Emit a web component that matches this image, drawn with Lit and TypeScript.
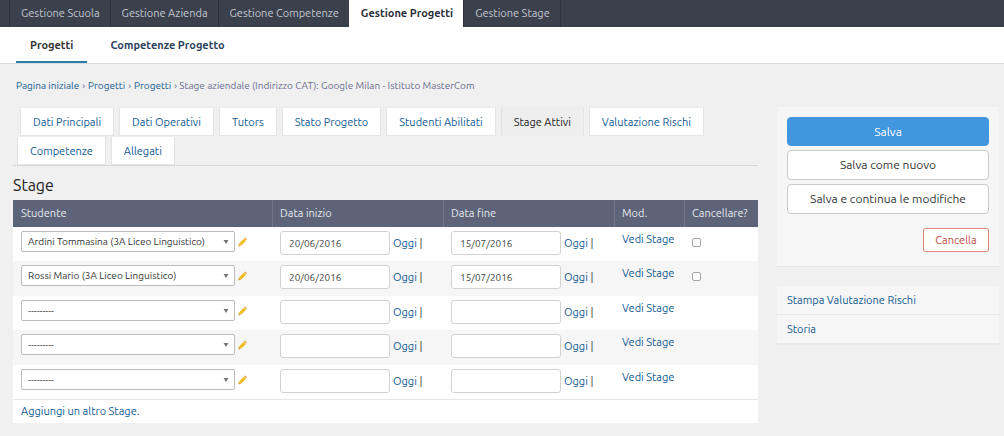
import { LitElement, html, css } from "lit";
import { customElement } from "lit/decorators.js";
import { classMap } from "lit/directives/class-map.js";

interface Row {
  student: string;
  start: string;
  end: string;
  saved: boolean;
}

const SECTIONS = ["Gestione Scuola", "Gestione Azienda", "Gestione Competenze", "Gestione Progetti", "Gestione Stage"];
const TABS = [
  "Dati Principali",
  "Dati Operativi",
  "Tutors",
  "Stato Progetto",
  "Studenti Abilitati",
  "Stage Attivi",
  "Valutazione Rischi",
  "Competenze",
  "Allegati",
];
const EMPTY = "---------";
const ROWS: Row[] = [
  { student: "Ardini Tommasina (3A Liceo Linguistico)", start: "20/06/2016", end: "15/07/2016", saved: true },
  { student: "Rossi Mario (3A Liceo Linguistico)", start: "20/06/2016", end: "15/07/2016", saved: true },
  { student: EMPTY, start: "", end: "", saved: false },
  { student: EMPTY, start: "", end: "", saved: false },
  { student: EMPTY, start: "", end: "", saved: false },
];

@customElement("app-root")
export class AppRoot extends LitElement {
  static styles = css`
    :host {
      display: block;
      min-height: 100vh;
      background: #f0f0f0;
      color: #333;
      font: 11px/16px Ubuntu, "Noto Sans", sans-serif;
    }
    * {
      box-sizing: border-box;
    }
    a {
      color: #125a92;
      text-decoration: none;
    }
    input,
    select,
    button {
      font: inherit;
      color: inherit;
      margin: 0;
    }
    .sections {
      display: flex;
      height: 27px;
      padding-left: 9px;
      background: #3b404d;
    }
    .section {
      padding: 5px 10px 6px 11px;
      border-left: 1px solid #2b2f39;
      color: #c3c7d1;
      white-space: nowrap;
    }
    .section:last-child {
      border-right: 1px solid #2f333d;
    }
    .section.on {
      background: #fff;
      border-color: #fff;
      color: #2b2f3a;
      font-weight: bold;
    }
    .subnav {
      display: flex;
      gap: 9px;
      height: 37px;
      padding-left: 16px;
      background: #fff;
      border-bottom: 1px solid #d9dbde;
    }
    .sub {
      padding: 10px 14px 8px;
      border-bottom: 2px solid transparent;
      color: #2c3f60;
      font-weight: bold;
      white-space: nowrap;
    }
    .sub.on {
      color: #333;
      border-color: #2b7cab;
    }
    .crumbs {
      display: flex;
      gap: 3px;
      padding: 14px 16px;
      font-size: 10px;
      line-height: 15px;
      color: #6a6c8c;
      white-space: nowrap;
    }
    .page {
      display: grid;
      grid-template-columns: minmax(0, 1fr) 222px;
      gap: 19px;
      align-items: start;
      padding: 0 5px 14px 13px;
    }
    .tabs {
      display: flex;
      flex-wrap: wrap;
      gap: 0 5px;
      padding-left: 4px;
      border-bottom: 1px solid #d8d8d8;
    }
    .tab {
      padding: 6px 12px;
      height: 29px;
      background: #fff;
      border: 1px solid #e4e4e4;
      border-top-color: #ececec;
      white-space: nowrap;
    }
    .tab:first-child {
      margin-left: 3px;
    }
    .tab.on {
      background: #eee;
      color: #222;
      border-bottom-color: #eee;
    }
    h2 {
      margin: 9px 0 4px;
      font-size: 16px;
      line-height: 21px;
      font-weight: normal;
      color: #222;
    }
    table {
      width: 100%;
      table-layout: fixed;
      border-collapse: separate;
      border-spacing: 0;
      background: #fff;
    }
    .c-date {
      width: 171px;
    }
    .c-mod {
      width: 70px;
    }
    .c-del {
      width: 74px;
    }
    th {
      height: 27px;
      padding: 0 8px 2px;
      background: #5d6378;
      color: #e6e8ee;
      font-weight: normal;
      text-align: left;
      white-space: nowrap;
    }
    th + th {
      padding-left: 7px;
      border-left: 1px solid #71778b;
    }
    td {
      height: 34px;
      padding: 4px 8px 0;
      vertical-align: top;
    }
    tr:nth-child(even) td {
      height: 35px;
      background: #f6f6f6;
    }
    .line {
      display: flex;
      align-items: center;
      gap: 3px;
    }
    .pick {
      width: 214px;
      height: 21px;
      padding: 0 16px 0 6px;
      appearance: none;
      border: 1px solid #bcbcbc;
      border-radius: 2px;
      font-size: 10px;
      background: #fff
        url("data:image/svg+xml,%3Csvg xmlns='http://www.w3.org/2000/svg' width='6' height='4'%3E%3Cpath d='M0.5 0h5L3 4z' fill='%23777'/%3E%3C/svg%3E")
        no-repeat right 5px center;
    }
    .date {
      width: 110px;
      height: 24px;
      padding: 0 8px;
      border: 1px solid #d2d2d2;
      border-radius: 3px;
      background: #fff;
      color: #444;
      font-size: 10px;
    }
    .check {
      width: 9px;
      height: 9px;
      margin-top: 7px;
      display: block;
      appearance: none;
      border: 1px solid #a5a5a5;
      border-radius: 2px;
      background: #fff;
    }
    .check:checked {
      background: #4196df;
    }
    .pencil {
      display: block;
    }
    .add {
      padding: 3px 8px 4px;
      background: #fff;
      border-top: 1px solid #e6e6e6;
    }
    .box {
      background: #f6f6f6;
      border-bottom: 1px solid #e8e8e8;
    }
    .actions {
      display: flex;
      flex-direction: column;
      gap: 4px;
      padding: 10px 10px 14px;
      margin-bottom: 19px;
    }
    .btn {
      height: 30px;
      padding: 0 8px;
      border: 1px solid #c9c9c9;
      border-radius: 4px;
      background: #fff;
      font-size: 12px;
    }
    .btn.main {
      height: 29px;
      border-color: #4196df;
      background: #4196df;
      color: #fff;
    }
    .cancel {
      align-self: flex-end;
      height: 24px;
      width: 66px;
      margin-top: 10px;
      padding: 0;
      border: 1px solid #dd8378;
      border-radius: 2px;
      background: #fff;
      color: #c6483c;
    }
    .tool {
      display: block;
      padding: 6px 10px;
      border-bottom: 1px solid #eaeaea;
    }
  `;

  private dateCell(label: string, value: string) {
    return html`<td>
      <div class="line">
        <input class="date" type="text" aria-label=${label} .value=${value} />
        <span><a href="#">Oggi</a> |</span>
      </div>
    </td>`;
  }

  private row(r: Row) {
    return html`<tr>
      <td>
        <div class="line">
          <select class="pick" aria-label="Studente"><option>${r.student}</option></select>
          <a href="#" aria-label="Modifica"
            ><svg class="pencil" width="9" height="10" viewBox="0 0 9 10">
              <path d="M.3 9.400l.5-2.800 2.300 2.100z" fill="#d9a13a" />
              <path d="M1 6.400L5.700 1.700l2.200 2.200L3.300 8.500z" fill="#f0bd20" />
              <path d="M6 1.400l.7-.7q.4-.3.800 0l1.200 1.200q.3.400 0 .8l-.7.800z" fill="#e6ab45" /></svg
          ></a>
        </div>
      </td>
      ${this.dateCell("Data inizio", r.start)} ${this.dateCell("Data fine", r.end)}
      <td><a href="#">Vedi Stage</a></td>
      <td>${r.saved ? html`<input class="check" type="checkbox" aria-label="Cancellare?" />` : ""}</td>
    </tr>`;
  }

  render() {
    return html`
      <nav class="sections">
        ${SECTIONS.map((s) => html`<a href="#" class=${classMap({ section: true, on: s === "Gestione Progetti" })}>${s}</a>`)}
      </nav>
      <nav class="subnav">
        <a href="#" class="sub on">Progetti</a>
        <a href="#" class="sub">Competenze Progetto</a>
      </nav>
      <nav class="crumbs">
        <a href="#">Pagina iniziale</a><span>›</span><a href="#">Progetti</a><span>›</span><a href="#">Progetti</a>
        <span>› Stage aziendale (Indirizzo CAT): Google Milan - Istituto MasterCom</span>
      </nav>
      <div class="page">
        <main>
          <div class="tabs">
            ${TABS.map((t) => html`<a href="#" class=${classMap({ tab: true, on: t === "Stage Attivi" })}>${t}</a>`)}
          </div>
          <h2>Stage</h2>
          <table>
            <colgroup>
              <col />
              <col class="c-date" />
              <col class="c-date" />
              <col class="c-mod" />
              <col class="c-del" />
            </colgroup>
            <thead>
              <tr>
                <th>Studente</th>
                <th>Data inizio</th>
                <th>Data fine</th>
                <th>Mod.</th>
                <th>Cancellare?</th>
              </tr>
            </thead>
            <tbody>
              ${ROWS.map((r) => this.row(r))}
            </tbody>
          </table>
          <div class="add"><a href="#">Aggiungi un altro Stage.</a></div>
        </main>
        <aside>
          <div class="box actions">
            <button class="btn main">Salva</button>
            <button class="btn">Salva come nuovo</button>
            <button class="btn">Salva e continua le modifiche</button>
            <button class="cancel">Cancella</button>
          </div>
          <div class="box">
            <a href="#" class="tool">Stampa Valutazione Rischi</a>
            <a href="#" class="tool">Storia</a>
          </div>
        </aside>
      </div>
    `;
  }
}
